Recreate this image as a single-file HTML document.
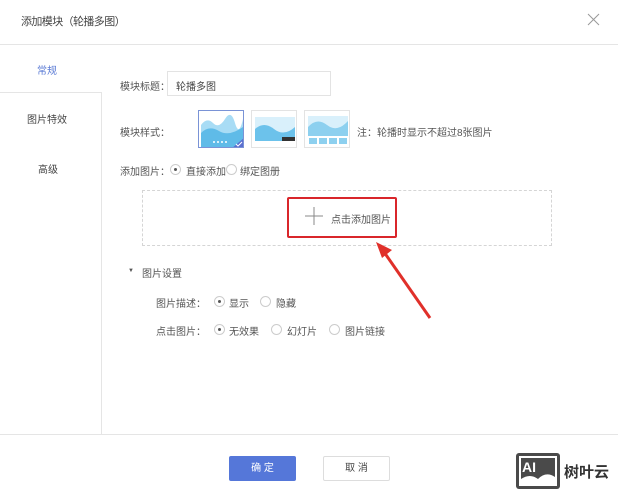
<!DOCTYPE html>
<html><head><meta charset="utf-8"><style>
*{margin:0;padding:0;box-sizing:border-box}
body{width:618px;height:500px;background:#fff;font-family:"Liberation Sans","Noto Sans CJK SC",sans-serif;font-size:10px;color:#555;position:relative;overflow:hidden}
.a{position:absolute;white-space:nowrap}
.radio{position:absolute;width:11px;height:11px;border:1px solid #ccc;border-radius:50%;background:#fff}
.radio.on::after{content:"";position:absolute;left:3px;top:3px;width:3px;height:3px;border-radius:50%;background:#555}
.thumb{position:absolute;width:46px;height:38px;border:1px solid #e3e3e3;background:#fff;overflow:hidden}
</style></head><body>
<div class="a" style="left:21px;top:13px;font-size:11px;letter-spacing:-0.6px;color:#444">添加模块（轮播多图）</div>
<svg class="a" style="left:587px;top:13px" width="13" height="13"><path d="M1 1L12 12M12 1L1 12" stroke="#999" stroke-width="1"/></svg>
<div class="a" style="left:0;top:44px;width:618px;height:1px;background:#e5e5e5"></div>
<div class="a" style="left:101px;top:92px;width:1px;height:343px;background:#e5e5e5"></div>
<div class="a" style="left:0;top:92px;width:102px;height:1px;background:#e5e5e5"></div>
<div class="a" style="left:37px;top:62px;color:#5b7bd5">常规</div>
<div class="a" style="left:27px;top:111px;color:#444">图片特效</div>
<div class="a" style="left:38px;top:161px;color:#444">高级</div>

<div class="a" style="left:120px;top:78px">模块标题：</div>
<div class="a" style="left:167px;top:71px;width:164px;height:25px;border:1px solid #e3e3e3;padding:6px 0 0 8px;color:#444">轮播多图</div>

<div class="a" style="left:120px;top:124px">模块样式：</div>
<div class="thumb" style="left:198px;top:110px;border-color:#7a93d6">
<svg width="46" height="38"><path d="M2 14Q8 6 14 12T26 8T36 12T44 8V38H2Z" fill="#a8dcf5"/><path d="M2 22Q10 14 20 20T44 16V38H2Z" fill="#5fbbe8"/><circle cx="15" cy="31" r="1" fill="#fff"/><circle cx="19" cy="31" r="1" fill="#fff"/><circle cx="23" cy="31" r="1" fill="#fff"/><circle cx="27" cy="31" r="1" fill="#fff"/><path d="M46 26V38H32Z" fill="#5b6fd0"/><path d="M37 33l2 2 4-4" stroke="#fff" fill="none"/></svg></div>
<div class="thumb" style="left:251px;top:110px">
<svg width="46" height="38"><rect x="3" y="6" width="40" height="24" fill="#d9f0fb"/><path d="M3 18Q12 10 22 18T43 16V30H3Z" fill="#6cc2eb"/><rect x="30" y="26" width="13" height="4" fill="#333"/></svg></div>
<div class="thumb" style="left:304px;top:110px">
<svg width="46" height="38"><rect x="3" y="5" width="40" height="20" fill="#d9f0fb"/><path d="M3 16Q12 6 22 14T43 10V25H3Z" fill="#8dd0ef"/><rect x="4" y="27" width="8" height="6" fill="#8dd0ef"/><rect x="14" y="27" width="8" height="6" fill="#8dd0ef"/><rect x="24" y="27" width="8" height="6" fill="#8dd0ef"/><rect x="34" y="27" width="8" height="6" fill="#8dd0ef"/></svg></div>
<div class="a" style="left:357px;top:124px">注：轮播时显示不超过8张图片</div>

<div class="a" style="left:120px;top:163px">添加图片：</div>
<div class="radio on" style="left:170px;top:164px"></div>
<div class="a" style="left:186px;top:163px">直接添加</div>
<div class="radio" style="left:226px;top:164px"></div>
<div class="a" style="left:240px;top:163px">绑定图册</div>

<div class="a" style="left:142px;top:190px;width:410px;height:56px;border:1px dashed #d5d5d5"></div>
<div class="a" style="left:287px;top:197px;width:110px;height:41px;border:2px solid #d9262b;border-radius:2px"></div>
<svg class="a" style="left:305px;top:207px" width="18" height="18"><path d="M9 0V18M0 9H18" stroke="#888" stroke-width="1"/></svg>
<div class="a" style="left:331px;top:211px">点击添加图片</div>
<svg class="a" style="left:370px;top:238px" width="70" height="85"><path d="M60 80L14 14" stroke="#e0302a" stroke-width="3"/><path d="M6 4L22 12L12 20Z" fill="#e0302a"/></svg>

<div class="a" style="left:128px;top:268px;font-size:6px">▼</div>
<div class="a" style="left:142px;top:265px">图片设置</div>

<div class="a" style="left:156px;top:295px">图片描述：</div>
<div class="radio on" style="left:214px;top:296px"></div>
<div class="a" style="left:229px;top:295px">显示</div>
<div class="radio" style="left:260px;top:296px"></div>
<div class="a" style="left:276px;top:295px">隐藏</div>

<div class="a" style="left:156px;top:323px">点击图片：</div>
<div class="radio on" style="left:214px;top:324px"></div>
<div class="a" style="left:229px;top:323px">无效果</div>
<div class="radio" style="left:271px;top:324px"></div>
<div class="a" style="left:287px;top:323px">幻灯片</div>
<div class="radio" style="left:329px;top:324px"></div>
<div class="a" style="left:345px;top:323px">图片链接</div>

<div class="a" style="left:0;top:434px;width:618px;height:1px;background:#e5e5e5"></div>
<div class="a" style="left:229px;top:456px;width:67px;height:25px;background:#5577d9;border-radius:2px;color:#fff;text-align:center;line-height:25px">确 定</div>
<div class="a" style="left:323px;top:456px;width:67px;height:25px;border:1px solid #ddd;border-radius:2px;color:#444;text-align:center;line-height:23px">取 消</div>
<div class="a" style="left:516px;top:453px;width:44px;height:36px;background:#4a4a4a;border-radius:3px"></div>
<svg class="a" style="left:518px;top:455px" width="40" height="32"><rect x="2" y="2" width="36" height="28" fill="none" stroke="#fff" stroke-width="2"/><text x="4" y="17" font-size="14" font-weight="bold" fill="#fff" font-family="Liberation Sans">AI</text><path d="M3 29L3 24Q12 18 20 24Q28 16 37 22V29Z" fill="#fff"/></svg>
<div class="a" style="left:564px;top:461px;font-size:15px;font-weight:bold;color:#333">树叶云</div>
</body></html>
